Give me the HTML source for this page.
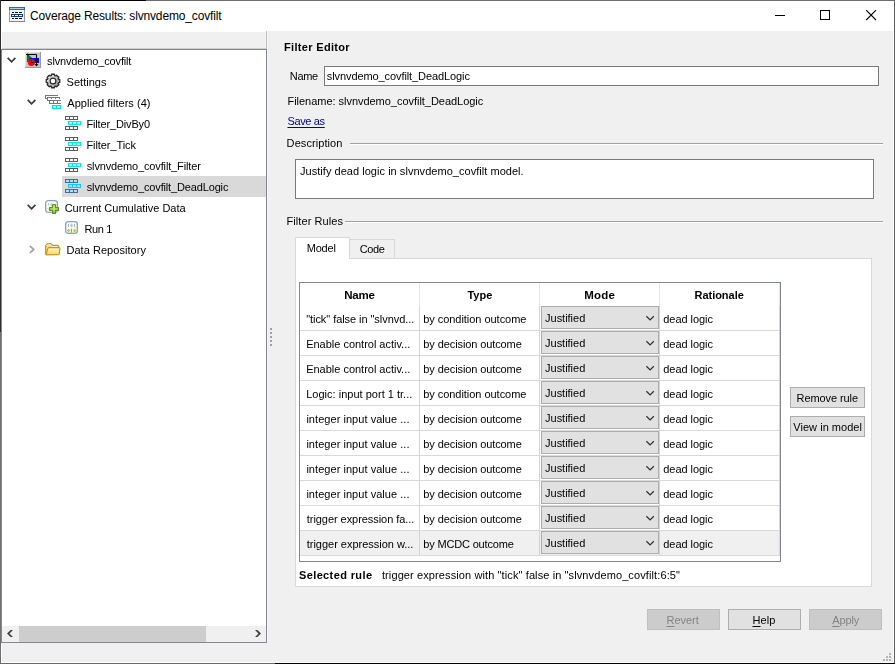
<!DOCTYPE html>
<html lang="en">
<head>
<meta charset="utf-8">
<title>Coverage Results: slvnvdemo_covfilt</title>
<style>
html,body{margin:0;padding:0}
body{width:895px;height:664px;position:relative;overflow:hidden;background:#f0f0f0;font-family:"Liberation Sans",sans-serif}
.b{position:absolute;box-sizing:border-box}
svg{position:absolute;overflow:visible}
.t{position:absolute;white-space:pre;line-height:1;font-family:"Liberation Sans", sans-serif;color:#000}
u{text-underline-offset:2px;text-decoration-thickness:1px}
.cb{position:absolute;box-sizing:border-box;left:541px;width:118px;height:23px;background:#e1e1e1;border:1px solid #adadad}
.hl{position:absolute;left:300px;width:479px;height:1px;background:#d9d9d9}
.btn{position:absolute;box-sizing:border-box;background:#e1e1e1;border:1px solid #adadad}
.dis{background:#cccccc;border-color:#bfbfbf}
</style>
</head>
<body>
<!-- title bar -->
<div class="b" style="left:0;top:0;width:895px;height:31px;background:#fff"></div>
<div class="b" style="left:0;top:31px;width:266px;height:1px;background:#fff"></div>
<!-- tree header strip + tree -->
<div class="b" style="left:1px;top:48px;width:266px;height:1px;background:#cfcfcf"></div>
<div class="b" style="left:266px;top:31px;width:1px;height:18px;background:#bdbdbd"></div>
<div class="b" style="left:267px;top:31px;width:1px;height:612px;background:#f6f6f6"></div>
<div class="b" style="left:265px;top:32px;width:1px;height:16px;background:#f6f6f6"></div>
<div class="b" style="left:1px;top:49px;width:266px;height:594px;background:#fff;border:1px solid #828790"></div>
<div class="b" style="left:62px;top:176px;width:204px;height:21px;background:#d9d9d9"></div>
<!-- tree scrollbar -->
<div class="b" style="left:2px;top:626px;width:264px;height:16px;background:#f0f0f0"></div>
<div class="b" style="left:19px;top:626px;width:187px;height:16px;background:#cdcdcd"></div>
<svg style="left:9px;top:7px" width="16" height="15" viewBox="0 0 16 15" shape-rendering="crispEdges"><rect x="0" y="0" width="16" height="15" fill="#9a9a9a"/><rect x="0" y="14" width="16" height="1" fill="#888"/><rect x="1" y="3" width="14" height="11" fill="#f4f4f4"/><rect x="0" y="0" width="16" height="3" fill="#3d6591"/><rect x="1" y="1" width="14" height="1" fill="#a9cdf0"/><rect x="3" y="5" width="2" height="1" fill="#000"/><rect x="6" y="5" width="3" height="1" fill="#000"/><rect x="10" y="5" width="3" height="1" fill="#000"/><rect x="3" y="11" width="2" height="1" fill="#000"/><rect x="6" y="11" width="3" height="1" fill="#000"/><rect x="10" y="11" width="3" height="1" fill="#000"/><rect x="2" y="7" width="12" height="3" fill="#0b3a8c"/><rect x="3" y="8" width="2" height="1" fill="#fff"/><rect x="6" y="8" width="3" height="1" fill="#fff"/><rect x="10" y="8" width="3" height="1" fill="#fff"/></svg>
<svg style="left:0px;top:0px" width="895" height="31" viewBox="0 0 895 31" shape-rendering="crispEdges"><rect x="775" y="15" width="10" height="1" fill="#000"/><rect x="820.5" y="10.5" width="9" height="9" fill="none" stroke="#000" stroke-width="1"/></svg><svg style="left:0px;top:0px" width="895" height="31" viewBox="0 0 895 31"><path d="M866.2 10.2 L876 20 M876 10.2 L866.2 20" stroke="#000" stroke-width="1.1" fill="none"/></svg>
<svg style="left:7px;top:57px" width="10" height="7" viewBox="0 0 10 7"><path d="M0.7 0.9 L4.55 4.75 L8.4 0.9" stroke="#3a3a3a" stroke-width="1.75" fill="none"/></svg>
<svg style="left:25px;top:52px" width="16" height="16" viewBox="0 0 16 16" shape-rendering="crispEdges"><rect x="0" y="0" width="16" height="16" fill="#c6c6c6"/><rect x="0" y="0" width="16" height="1" fill="#e2e2e2"/><rect x="0" y="0" width="1" height="16" fill="#e2e2e2"/><rect x="0" y="15" width="16" height="1" fill="#9a9a9a"/><rect x="15" y="0" width="1" height="16" fill="#9a9a9a"/></svg><svg style="left:25px;top:52px" width="16" height="16" viewBox="0 0 16 16"><path d="M2 1 L2 10 L7 10 L7 6 Z" fill="#008000"/><rect x="5" y="6" width="9" height="5" fill="#0000ff"/><circle cx="6.4" cy="10.4" r="3.5" fill="#ff0000"/><path d="M6.5 8 L6.5 10.5 L8.5 10.5" stroke="#000" stroke-width="1" fill="none"/><path d="M1 2.5 L11.5 2.5 L11.5 13" stroke="#000" stroke-width="1" fill="none"/><path d="M9.5 12 L13.5 12 L11.5 14.5 Z" fill="#000"/></svg>
<svg style="left:46px;top:74px" width="14" height="14" viewBox="0 0 14 14"><defs><linearGradient id="gg" x1="0" y1="0" x2="1" y2="1"><stop offset="0" stop-color="#fafafa"/><stop offset="1" stop-color="#8e8e8e"/></linearGradient></defs><path d="M5.49 0.27 L8.51 0.27 L8.68 1.55 L9.67 1.96 L10.70 1.17 L12.83 3.30 L12.04 4.33 L12.45 5.32 L13.73 5.49 L13.73 8.51 L12.45 8.68 L12.04 9.67 L12.83 10.70 L10.70 12.83 L9.67 12.04 L8.68 12.45 L8.51 13.73 L5.49 13.73 L5.32 12.45 L4.33 12.04 L3.30 12.83 L1.17 10.70 L1.96 9.67 L1.55 8.68 L0.27 8.51 L0.27 5.49 L1.55 5.32 L1.96 4.33 L1.17 3.30 L3.30 1.17 L4.33 1.96 L5.32 1.55 Z" fill="url(#gg)" stroke="#2a2a2a" stroke-width="1.3" stroke-linejoin="round"/><circle cx="7" cy="7" r="2.9" fill="#fff" stroke="#2a2a2a" stroke-width="1.2"/></svg>
<svg style="left:27px;top:99px" width="10" height="7" viewBox="0 0 10 7"><path d="M0.7 0.9 L4.55 4.75 L8.4 0.9" stroke="#3a3a3a" stroke-width="1.75" fill="none"/></svg>
<svg style="left:45px;top:95px" width="16" height="14" viewBox="0 0 16 14" shape-rendering="crispEdges"><rect x="0" y="0" width="13" height="1" fill="#767676"/><rect x="0" y="0" width="1" height="3" fill="#767676"/><rect x="0" y="3" width="2" height="1" fill="#767676"/><rect x="2" y="2" width="13" height="1" fill="#767676"/><rect x="2" y="2" width="1" height="3" fill="#767676"/><rect x="2" y="5" width="2" height="1" fill="#767676"/><rect x="6" y="2" width="1" height="2" fill="#767676"/><rect x="10" y="2" width="1" height="2" fill="#767676"/><rect x="14" y="2" width="1" height="2" fill="#767676"/><rect x="4" y="5" width="12" height="1" fill="#767676"/><rect x="4" y="8" width="12" height="1" fill="#767676"/><rect x="4" y="5" width="1" height="4" fill="#767676"/><rect x="8" y="5" width="1" height="4" fill="#767676"/><rect x="12" y="5" width="1" height="4" fill="#767676"/><rect x="7" y="10" width="9" height="4" fill="#00e0e0"/><rect x="8" y="11" width="3" height="2" fill="#a8ffff"/><rect x="12" y="11" width="3" height="2" fill="#a8ffff"/></svg>
<svg style="left:65px;top:116px" width="16" height="14" viewBox="0 0 16 14" shape-rendering="crispEdges"><rect x="0" y="0" width="13" height="4" fill="#5a5a5a"/><rect x="1" y="1" width="3" height="2" fill="#ffffff"/><rect x="5" y="1" width="3" height="2" fill="#ffffff"/><rect x="9" y="1" width="3" height="2" fill="#ffffff"/><rect x="0" y="10" width="13" height="4" fill="#5a5a5a"/><rect x="1" y="11" width="3" height="2" fill="#ffffff"/><rect x="5" y="11" width="3" height="2" fill="#ffffff"/><rect x="9" y="11" width="3" height="2" fill="#ffffff"/><rect x="3" y="5" width="13" height="4" fill="#00e8e8"/><rect x="4" y="6" width="3" height="2" fill="#b4ffff"/><rect x="8" y="6" width="3" height="2" fill="#b4ffff"/><rect x="12" y="6" width="3" height="2" fill="#b4ffff"/></svg>
<svg style="left:65px;top:137px" width="16" height="14" viewBox="0 0 16 14" shape-rendering="crispEdges"><rect x="0" y="0" width="13" height="4" fill="#5a5a5a"/><rect x="1" y="1" width="3" height="2" fill="#ffffff"/><rect x="5" y="1" width="3" height="2" fill="#ffffff"/><rect x="9" y="1" width="3" height="2" fill="#ffffff"/><rect x="0" y="10" width="13" height="4" fill="#5a5a5a"/><rect x="1" y="11" width="3" height="2" fill="#ffffff"/><rect x="5" y="11" width="3" height="2" fill="#ffffff"/><rect x="9" y="11" width="3" height="2" fill="#ffffff"/><rect x="3" y="5" width="13" height="4" fill="#00e8e8"/><rect x="4" y="6" width="3" height="2" fill="#b4ffff"/><rect x="8" y="6" width="3" height="2" fill="#b4ffff"/><rect x="12" y="6" width="3" height="2" fill="#b4ffff"/></svg>
<svg style="left:65px;top:158px" width="16" height="14" viewBox="0 0 16 14" shape-rendering="crispEdges"><rect x="0" y="0" width="13" height="4" fill="#5a5a5a"/><rect x="1" y="1" width="3" height="2" fill="#ffffff"/><rect x="5" y="1" width="3" height="2" fill="#ffffff"/><rect x="9" y="1" width="3" height="2" fill="#ffffff"/><rect x="0" y="10" width="13" height="4" fill="#5a5a5a"/><rect x="1" y="11" width="3" height="2" fill="#ffffff"/><rect x="5" y="11" width="3" height="2" fill="#ffffff"/><rect x="9" y="11" width="3" height="2" fill="#ffffff"/><rect x="3" y="5" width="13" height="4" fill="#00e8e8"/><rect x="4" y="6" width="3" height="2" fill="#b4ffff"/><rect x="8" y="6" width="3" height="2" fill="#b4ffff"/><rect x="12" y="6" width="3" height="2" fill="#b4ffff"/></svg>
<svg style="left:65px;top:179px" width="16" height="14" viewBox="0 0 16 14" shape-rendering="crispEdges"><rect x="0" y="0" width="13" height="4" fill="#3f6f9a"/><rect x="1" y="1" width="3" height="2" fill="#b5dcfb"/><rect x="5" y="1" width="3" height="2" fill="#b5dcfb"/><rect x="9" y="1" width="3" height="2" fill="#b5dcfb"/><rect x="0" y="10" width="13" height="4" fill="#3f6f9a"/><rect x="1" y="11" width="3" height="2" fill="#b5dcfb"/><rect x="5" y="11" width="3" height="2" fill="#b5dcfb"/><rect x="9" y="11" width="3" height="2" fill="#b5dcfb"/><rect x="3" y="5" width="13" height="4" fill="#0ccdf0"/><rect x="4" y="6" width="3" height="2" fill="#8fe4fb"/><rect x="8" y="6" width="3" height="2" fill="#8fe4fb"/><rect x="12" y="6" width="3" height="2" fill="#8fe4fb"/></svg>
<svg style="left:27px;top:204px" width="10" height="7" viewBox="0 0 10 7"><path d="M0.7 0.9 L4.55 4.75 L8.4 0.9" stroke="#3a3a3a" stroke-width="1.75" fill="none"/></svg>
<svg style="left:45px;top:200px" width="16" height="16" viewBox="0 0 16 16"><defs><linearGradient id="dg1" x1="0" y1="0" x2="1" y2="1"><stop offset="0.15" stop-color="#ffffff"/><stop offset="1" stop-color="#fbf59a"/></linearGradient></defs><rect x="0.65" y="0.65" width="11.7" height="11.7" rx="2.4" fill="url(#dg1)" stroke="#86a3cb" stroke-width="1.3"/><rect x="3" y="3" width="1" height="2.5" fill="#b5c9e6"/><path d="M6.5 2.6 L8.2 4.5 L6.5 6.4 L4.8 4.5 Z" fill="#c3d4ec"/><path d="M2.2 8.6 L3.4 7.6 L3.4 9.6 Z" fill="#b4b4c0"/><defs><linearGradient id="pg" x1="0" y1="0" x2="0" y2="1"><stop offset="0" stop-color="#f2fcdc"/><stop offset="0.45" stop-color="#b6e870"/><stop offset="1" stop-color="#9cd84a"/></linearGradient></defs><path d="M7.6 4.6 H10.4 V7.6 H13.4 V10.4 H10.4 V13.4 H7.6 V10.4 H4.6 V7.6 H7.6 Z" fill="url(#pg)" stroke="#648f27" stroke-width="1.2" stroke-linejoin="round"/></svg>
<svg style="left:65px;top:221px" width="16" height="16" viewBox="0 0 16 16"><defs><linearGradient id="dg0" x1="0" y1="0" x2="1" y2="1"><stop offset="0.15" stop-color="#ffffff"/><stop offset="1" stop-color="#fbf59a"/></linearGradient></defs><rect x="0.65" y="0.65" width="11.7" height="11.7" rx="2.4" fill="url(#dg0)" stroke="#86a3cb" stroke-width="1.3"/><rect x="3" y="3" width="1" height="3" fill="#9db7dc"/><rect x="9" y="3" width="1" height="3" fill="#9db7dc"/><path d="M6.5 2.6 L8.2 4.5 L6.5 6.4 L4.8 4.5 Z" fill="#b3c9e8"/><path d="M3.6 7.8 L5.3 9.6 L3.6 11.4 L1.9 9.6 Z" fill="#b4b4c0"/><rect x="6" y="7.6" width="1" height="4" fill="#9797a6"/><path d="M9.6 7.8 L11.3 9.6 L9.6 11.4 L7.9 9.6 Z" fill="#b3bf9c"/></svg>
<svg style="left:29px;top:245px" width="7" height="10" viewBox="0 0 7 10"><path d="M0.8 0.8 L4.7 4.4 L0.8 8" stroke="#a0a0a0" stroke-width="1.7" fill="none"/></svg>
<svg style="left:45px;top:243px" width="16" height="13" viewBox="0 0 16 13"><defs><linearGradient id="fg" x1="0" y1="0" x2="0" y2="1"><stop offset="0" stop-color="#fffdf0"/><stop offset="0.35" stop-color="#fcea9a"/><stop offset="1" stop-color="#f6d75c"/></linearGradient></defs><path d="M0.6 11 L0.6 2.6 L2.4 0.6 L6 0.6 L7.6 2.4 L12.8 2.4 L13.6 3.2 L13.6 11.4 L1.4 11.8 Z" fill="#f6da70" stroke="#c4941a" stroke-width="1.1" stroke-linejoin="round"/><path d="M1.7 3 L2.8 1.7 L5.6 1.7 L7.2 3.5 L12.5 3.5" fill="none" stroke="#fff8d8" stroke-width="0.9"/><path d="M4 4.6 L14 4.6 Q15 4.6 14.9 5.6 L14.3 10.4 Q14.1 11.8 13 11.8 L1.8 11.8 Q1 11.8 1.4 10.6 L2.7 6 Q3 4.6 4 4.6 Z" fill="url(#fg)" stroke="#c4941a" stroke-width="1.1" stroke-linejoin="round"/></svg>
<svg style="left:0px;top:0px" width="270" height="664" viewBox="0 0 270 664"><path d="M13 630 L10.6 630 L7 633.5 L10.6 637 L13 637 L9.5 633.5 Z" fill="#3f3f3f"/><path d="M255 630 L257.4 630 L261 633.5 L257.4 637 L255 637 L258.5 633.5 Z" fill="#3f3f3f"/></svg>
<!-- splitter dots -->
<div class="b" style="left:270px;top:328px;width:2px;height:2px;background:#a0a0a0;box-shadow:0 4px #a0a0a0,0 8px #a0a0a0,0 12px #a0a0a0,0 16px #a0a0a0"></div>
<!-- right panel -->
<div class="b" style="left:324px;top:66px;width:555px;height:20px;background:#fff;border:1px solid #7a7a7a"></div>
<div class="b" style="left:350px;top:143px;width:533px;height:2px;background:#a0a0a0;border-bottom:1px solid #fff"></div>
<div class="b" style="left:295px;top:159px;width:579px;height:40px;background:#fff;border:1px solid #7a7a7a"></div>
<div class="b" style="left:345px;top:221px;width:538px;height:2px;background:#a0a0a0;border-bottom:1px solid #fff"></div>
<!-- tab pane -->
<div class="b" style="left:295px;top:258px;width:577px;height:329px;background:#fff;border:1px solid #d9d9d9"></div>
<div class="b" style="left:349px;top:239px;width:46px;height:20px;background:#f0f0f0;border:1px solid #d9d9d9"></div>
<div class="b" style="left:295px;top:237px;width:55px;height:22px;background:#fff;border:1px solid #d9d9d9;border-bottom:none"></div>
<!-- table -->
<div class="b" style="left:299px;top:282px;width:482px;height:280px;background:#fff;border:1px solid #828790"></div>
<div class="b" style="left:300px;top:531px;width:479px;height:24px;background:#f0f0f0"></div>
<div class="b" style="left:419px;top:283px;width:1px;height:23px;background:#e5e5e5"></div>
<div class="b" style="left:419px;top:306px;width:1px;height:250px;background:#d4d4d4"></div>
<div class="b" style="left:539px;top:283px;width:1px;height:23px;background:#e5e5e5"></div>
<div class="b" style="left:539px;top:306px;width:1px;height:250px;background:#d4d4d4"></div>
<div class="b" style="left:659px;top:283px;width:1px;height:23px;background:#e5e5e5"></div>
<div class="b" style="left:659px;top:306px;width:1px;height:250px;background:#d4d4d4"></div>
<div class="b" style="left:779px;top:283px;width:1px;height:23px;background:#e5e5e5"></div>
<div class="b" style="left:779px;top:306px;width:1px;height:250px;background:#d4d4d4"></div>
<div class="hl" style="top:330px"></div>
<div class="cb" style="top:306px"></div>
<svg style="left:645px;top:315px" width="11" height="7" viewBox="0 0 11 7"><path d="M1.4 1.2 L5.1 4.9 L8.8 1.2" stroke="#303030" stroke-width="1.25" fill="none"/></svg>
<div class="hl" style="top:355px"></div>
<div class="cb" style="top:331px"></div>
<svg style="left:645px;top:340px" width="11" height="7" viewBox="0 0 11 7"><path d="M1.4 1.2 L5.1 4.9 L8.8 1.2" stroke="#303030" stroke-width="1.25" fill="none"/></svg>
<div class="hl" style="top:380px"></div>
<div class="cb" style="top:356px"></div>
<svg style="left:645px;top:365px" width="11" height="7" viewBox="0 0 11 7"><path d="M1.4 1.2 L5.1 4.9 L8.8 1.2" stroke="#303030" stroke-width="1.25" fill="none"/></svg>
<div class="hl" style="top:405px"></div>
<div class="cb" style="top:381px"></div>
<svg style="left:645px;top:390px" width="11" height="7" viewBox="0 0 11 7"><path d="M1.4 1.2 L5.1 4.9 L8.8 1.2" stroke="#303030" stroke-width="1.25" fill="none"/></svg>
<div class="hl" style="top:430px"></div>
<div class="cb" style="top:406px"></div>
<svg style="left:645px;top:415px" width="11" height="7" viewBox="0 0 11 7"><path d="M1.4 1.2 L5.1 4.9 L8.8 1.2" stroke="#303030" stroke-width="1.25" fill="none"/></svg>
<div class="hl" style="top:455px"></div>
<div class="cb" style="top:431px"></div>
<svg style="left:645px;top:440px" width="11" height="7" viewBox="0 0 11 7"><path d="M1.4 1.2 L5.1 4.9 L8.8 1.2" stroke="#303030" stroke-width="1.25" fill="none"/></svg>
<div class="hl" style="top:480px"></div>
<div class="cb" style="top:456px"></div>
<svg style="left:645px;top:465px" width="11" height="7" viewBox="0 0 11 7"><path d="M1.4 1.2 L5.1 4.9 L8.8 1.2" stroke="#303030" stroke-width="1.25" fill="none"/></svg>
<div class="hl" style="top:505px"></div>
<div class="cb" style="top:481px"></div>
<svg style="left:645px;top:490px" width="11" height="7" viewBox="0 0 11 7"><path d="M1.4 1.2 L5.1 4.9 L8.8 1.2" stroke="#303030" stroke-width="1.25" fill="none"/></svg>
<div class="hl" style="top:530px"></div>
<div class="cb" style="top:506px"></div>
<svg style="left:645px;top:515px" width="11" height="7" viewBox="0 0 11 7"><path d="M1.4 1.2 L5.1 4.9 L8.8 1.2" stroke="#303030" stroke-width="1.25" fill="none"/></svg>
<div class="hl" style="top:555px"></div>
<div class="cb" style="top:531px"></div>
<svg style="left:645px;top:540px" width="11" height="7" viewBox="0 0 11 7"><path d="M1.4 1.2 L5.1 4.9 L8.8 1.2" stroke="#303030" stroke-width="1.25" fill="none"/></svg>
<!-- buttons -->
<div class="btn" style="left:790px;top:387px;width:75px;height:21px"></div>
<div class="btn" style="left:790px;top:416px;width:75px;height:21px"></div>
<div class="btn dis" style="left:647px;top:609px;width:73px;height:21px"></div>
<div class="btn" style="left:728px;top:609px;width:73px;height:21px"></div>
<div class="btn dis" style="left:809px;top:609px;width:73px;height:21px"></div>
<!-- size grip -->
<div class="b" style="left:889px;top:653px;width:2px;height:2px;background:#b4b4b4;box-shadow:0 3px #b4b4b4,0 6px #b4b4b4,-3px 3px #b4b4b4,-3px 6px #b4b4b4,-6px 6px #b4b4b4"></div>
<span class="t" style="left:30.01px;top:10.00px;font-size:12px;letter-spacing:-0.153px;">Coverage Results: slvnvdemo_covfilt</span>
<div class="b" style="left:0;top:0;width:895px;height:664px;will-change:transform">
<span class="t" style="left:47.06px;top:56.00px;font-size:11px;letter-spacing:-0.152px;">slvnvdemo_covfilt</span>
<span class="t" style="left:66.54px;top:77.00px;font-size:11px;letter-spacing:0.029px;">Settings</span>
<span class="t" style="left:67.27px;top:98.00px;font-size:11px;letter-spacing:0.038px;">Applied filters (4)</span>
<span class="t" style="left:86.43px;top:119.00px;font-size:11px;letter-spacing:-0.147px;">Filter_DivBy0</span>
<span class="t" style="left:86.42px;top:140.00px;font-size:11px;letter-spacing:-0.077px;">Filter_Tick</span>
<span class="t" style="left:86.74px;top:161.00px;font-size:11px;letter-spacing:-0.143px;">slvnvdemo_covfilt_Filter</span>
<span class="t" style="left:86.77px;top:182.00px;font-size:11px;letter-spacing:-0.150px;">slvnvdemo_covfilt_DeadLogic</span>
<span class="t" style="left:64.68px;top:203.00px;font-size:11px;letter-spacing:-0.005px;">Current Cumulative Data</span>
<span class="t" style="left:84.45px;top:224.00px;font-size:11px;letter-spacing:-0.350px;">Run 1</span>
<span class="t" style="left:66.40px;top:245.00px;font-size:11px;letter-spacing:0.049px;">Data Repository</span>
<span class="t" style="left:284.07px;top:42.00px;font-size:11px;font-weight:700;letter-spacing:0.320px;">Filter Editor</span>
<span class="t" style="left:289.82px;top:71.00px;font-size:11px;letter-spacing:-0.342px;">Name</span>
<span class="t" style="left:326.86px;top:71.00px;font-size:11px;letter-spacing:-0.095px;">slvnvdemo_covfilt_DeadLogic</span>
<span class="t" style="left:287.47px;top:96.00px;font-size:11px;letter-spacing:-0.030px;">Filename: slvnvdemo_covfilt_DeadLogic</span>
<span class="t" style="left:287.44px;top:116.00px;font-size:11px;color:#000090;letter-spacing:-0.350px;text-decoration:underline;text-underline-offset:2px;text-decoration-thickness:1px;">Save as</span>
<span class="t" style="left:286.62px;top:138.00px;font-size:11px;letter-spacing:0.076px;">Description</span>
<span class="t" style="left:299.99px;top:166.00px;font-size:11px;letter-spacing:0.038px;">Justify dead logic in slvnvdemo_covfilt model.</span>
<span class="t" style="left:286.53px;top:216.00px;font-size:11px;letter-spacing:0.083px;">Filter Rules</span>
<span class="t" style="left:306.65px;top:243.00px;font-size:11px;letter-spacing:-0.172px;">Model</span>
<span class="t" style="left:359.74px;top:244.00px;font-size:11px;letter-spacing:-0.350px;">Code</span>
<span class="t" style="left:344.14px;top:290.00px;font-size:11.5px;font-weight:700;letter-spacing:-0.180px;">Name</span>
<span class="t" style="left:467.39px;top:290.00px;font-size:11px;font-weight:700;letter-spacing:0.043px;">Type</span>
<span class="t" style="left:584.16px;top:290.00px;font-size:11.5px;font-weight:700;letter-spacing:0.263px;">Mode</span>
<span class="t" style="left:694.49px;top:290.00px;font-size:11px;font-weight:700;letter-spacing:-0.025px;">Rationale</span>
<span class="t" style="left:306.18px;top:314.00px;font-size:11px;letter-spacing:-0.058px;">"tick" false in "slvnvd...</span>
<span class="t" style="left:423.15px;top:314.00px;font-size:11px;letter-spacing:-0.035px;">by condition outcome</span>
<span class="t" style="left:545.07px;top:313.00px;font-size:11px;letter-spacing:-0.019px;">Justified</span>
<span class="t" style="left:663.27px;top:314.00px;font-size:11px;letter-spacing:-0.046px;">dead logic</span>
<span class="t" style="left:306.20px;top:339.00px;font-size:11px;letter-spacing:-0.013px;">Enable control activ...</span>
<span class="t" style="left:423.35px;top:339.00px;font-size:11px;letter-spacing:-0.101px;">by decision outcome</span>
<span class="t" style="left:545.07px;top:338.00px;font-size:11px;letter-spacing:-0.019px;">Justified</span>
<span class="t" style="left:663.27px;top:339.00px;font-size:11px;letter-spacing:-0.046px;">dead logic</span>
<span class="t" style="left:306.20px;top:364.00px;font-size:11px;letter-spacing:-0.013px;">Enable control activ...</span>
<span class="t" style="left:423.35px;top:364.00px;font-size:11px;letter-spacing:-0.101px;">by decision outcome</span>
<span class="t" style="left:545.07px;top:363.00px;font-size:11px;letter-spacing:-0.019px;">Justified</span>
<span class="t" style="left:663.27px;top:364.00px;font-size:11px;letter-spacing:-0.046px;">dead logic</span>
<span class="t" style="left:306.22px;top:389.00px;font-size:11px;letter-spacing:0.013px;">Logic: input port 1 tr...</span>
<span class="t" style="left:423.15px;top:389.00px;font-size:11px;letter-spacing:-0.035px;">by condition outcome</span>
<span class="t" style="left:545.07px;top:388.00px;font-size:11px;letter-spacing:-0.019px;">Justified</span>
<span class="t" style="left:663.27px;top:389.00px;font-size:11px;letter-spacing:-0.046px;">dead logic</span>
<span class="t" style="left:306.39px;top:414.00px;font-size:11px;letter-spacing:0.047px;">integer input value ...</span>
<span class="t" style="left:423.35px;top:414.00px;font-size:11px;letter-spacing:-0.101px;">by decision outcome</span>
<span class="t" style="left:545.07px;top:413.00px;font-size:11px;letter-spacing:-0.019px;">Justified</span>
<span class="t" style="left:663.27px;top:414.00px;font-size:11px;letter-spacing:-0.046px;">dead logic</span>
<span class="t" style="left:306.39px;top:439.00px;font-size:11px;letter-spacing:0.047px;">integer input value ...</span>
<span class="t" style="left:423.35px;top:439.00px;font-size:11px;letter-spacing:-0.101px;">by decision outcome</span>
<span class="t" style="left:545.07px;top:438.00px;font-size:11px;letter-spacing:-0.019px;">Justified</span>
<span class="t" style="left:663.27px;top:439.00px;font-size:11px;letter-spacing:-0.046px;">dead logic</span>
<span class="t" style="left:306.39px;top:464.00px;font-size:11px;letter-spacing:0.047px;">integer input value ...</span>
<span class="t" style="left:423.35px;top:464.00px;font-size:11px;letter-spacing:-0.101px;">by decision outcome</span>
<span class="t" style="left:545.07px;top:463.00px;font-size:11px;letter-spacing:-0.019px;">Justified</span>
<span class="t" style="left:663.27px;top:464.00px;font-size:11px;letter-spacing:-0.046px;">dead logic</span>
<span class="t" style="left:306.39px;top:489.00px;font-size:11px;letter-spacing:0.047px;">integer input value ...</span>
<span class="t" style="left:423.35px;top:489.00px;font-size:11px;letter-spacing:-0.101px;">by decision outcome</span>
<span class="t" style="left:545.07px;top:488.00px;font-size:11px;letter-spacing:-0.019px;">Justified</span>
<span class="t" style="left:663.27px;top:489.00px;font-size:11px;letter-spacing:-0.046px;">dead logic</span>
<span class="t" style="left:306.78px;top:514.00px;font-size:11px;letter-spacing:-0.053px;">trigger expression fa...</span>
<span class="t" style="left:423.35px;top:514.00px;font-size:11px;letter-spacing:-0.101px;">by decision outcome</span>
<span class="t" style="left:545.07px;top:513.00px;font-size:11px;letter-spacing:-0.019px;">Justified</span>
<span class="t" style="left:663.27px;top:514.00px;font-size:11px;letter-spacing:-0.046px;">dead logic</span>
<span class="t" style="left:306.75px;top:539.00px;font-size:11px;letter-spacing:-0.017px;">trigger expression w...</span>
<span class="t" style="left:423.30px;top:539.00px;font-size:11px;letter-spacing:-0.174px;">by MCDC outcome</span>
<span class="t" style="left:545.07px;top:538.00px;font-size:11px;letter-spacing:-0.019px;">Justified</span>
<span class="t" style="left:663.27px;top:539.00px;font-size:11px;letter-spacing:-0.046px;">dead logic</span>
<span class="t" style="left:298.99px;top:570.00px;font-size:11px;font-weight:700;letter-spacing:0.378px;">Selected rule</span>
<span class="t" style="left:381.95px;top:570.00px;font-size:11px;letter-spacing:0.107px;">trigger expression with "tick" false in "slvnvdemo_covfilt:6:5"</span>
<span class="t" style="left:796.60px;top:393.00px;font-size:11px;letter-spacing:-0.094px;">Remove rule</span>
<span class="t" style="left:793.34px;top:422.00px;font-size:11px;letter-spacing:0.028px;">View in model</span>
<span class="t" style="left:666.50px;top:615.00px;font-size:11px;color:#838383;letter-spacing:-0.018px;"><u>R</u>evert</span>
<span class="t" style="left:752.50px;top:615.00px;font-size:11px;letter-spacing:0.068px;"><u>H</u>elp</span>
<span class="t" style="left:832.24px;top:615.00px;font-size:11px;color:#838383;letter-spacing:-0.125px;"><u>A</u>pply</span>
</div>
<!-- window frame -->
<div class="b" style="left:1px;top:1px;width:1px;height:48px;background:#fff"></div>
<div class="b" style="left:1px;top:643px;width:1px;height:20px;background:#fff"></div>
<div class="b" style="left:893px;top:1px;width:1px;height:662px;background:#fff"></div>
<div class="b" style="left:1px;top:662px;width:893px;height:1px;background:#fff"></div>
<div class="b" style="left:0;top:0;width:895px;height:1px;background:#6e6e6e"></div>
<div class="b" style="left:0;top:0;width:146px;height:1px;background:#000"></div>
<div class="b" style="left:0;top:0;width:1px;height:332px;background:#2e2e2e"></div>
<div class="b" style="left:0;top:332px;width:1px;height:332px;background:#707070"></div>
<div class="b" style="left:894px;top:0;width:1px;height:664px;background:#606060"></div>
<div class="b" style="left:0;top:663px;width:275px;height:1px;background:#6a6a6a"></div>
<div class="b" style="left:275px;top:663px;width:620px;height:1px;background:#000"></div>
</body>
</html>
